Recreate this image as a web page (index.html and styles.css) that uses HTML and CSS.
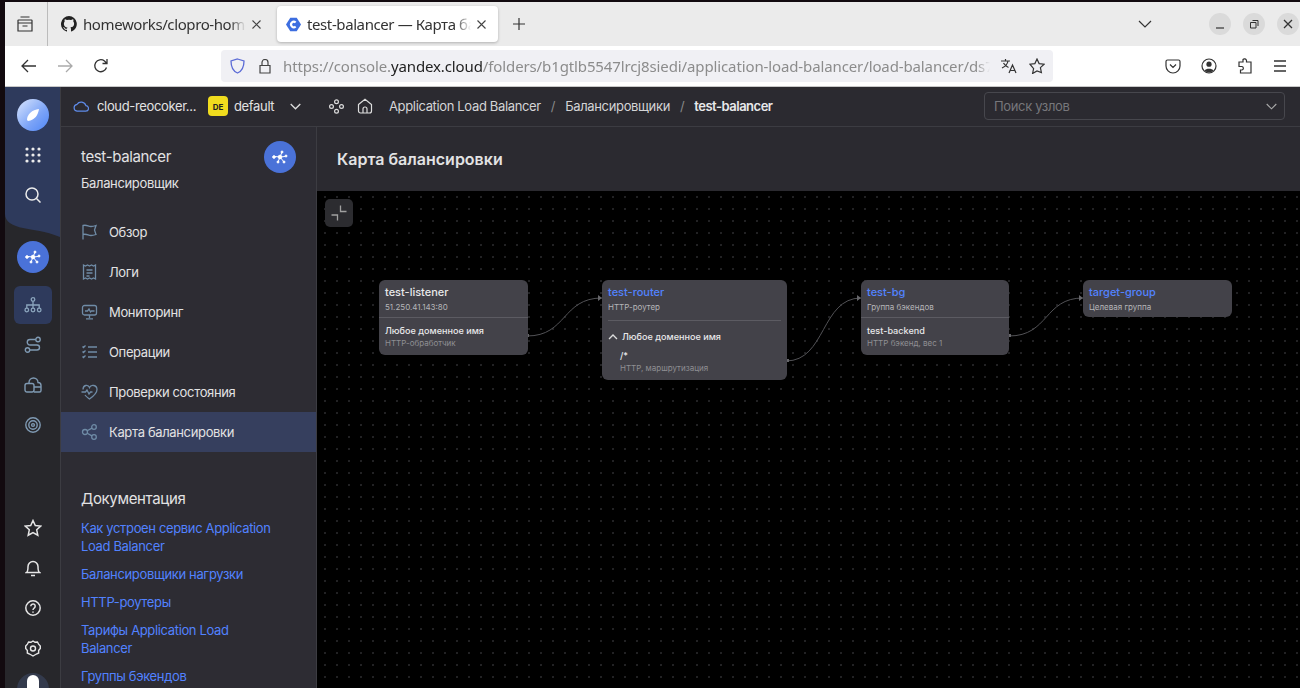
FILE: index.html
```html
<!DOCTYPE html>
<html lang="en">
<head>
    <meta charset="UTF-8">
    <title>test-balancer — Карта балансировки</title>
    <link rel="stylesheet" href="styles.css">
</head>
<body>

    <!-- Browser chrome -->
    <div class="tabbar">
        <svg class="tab-list" width="16" height="16" viewBox="0 0 16 16" fill="none" stroke="#333" stroke-width="1.200"><path d="M3.500 1h9M1.500 4h13a.5.500 0 0 1 .5.500V15H1V4.500a.5.500 0 0 1 .5-.5zM1 7h14M5.500 10h5"/></svg>
        <div class="tab">
            <svg width="16" height="16" viewBox="0 0 16 16" fill="#222"><path d="M8 0a8 8 0 0 0-2.500 15.600c.4.100.5-.2.5-.4v-1.400c-2.200.5-2.700-1-2.700-1-.4-.9-.9-1.200-.9-1.200-.7-.5.100-.5.100-.5.800.1 1.200.8 1.200.8.700 1.200 1.900.9 2.300.7.100-.5.300-.9.500-1.100-1.800-.2-3.600-.9-3.600-4 0-.9.300-1.600.8-2.100-.1-.2-.4-1 .1-2.100 0 0 .7-.2 2.200.8a7.600 7.600 0 0 1 4 0c1.500-1 2.200-.8 2.200-.8.400 1.100.2 1.900.1 2.100.5.600.8 1.300.8 2.100 0 3.100-1.900 3.700-3.700 3.900.3.300.6.700.6 1.500v2.200c0 .2.100.5.600.4A8 8 0 0 0 8 0z"/></svg>
            <span class="tab-title">homeworks/clopro-home</span>
            <svg class="tab-close" width="9" height="9" viewBox="0 0 9 9" fill="none" stroke="#444" stroke-width="1.100"><path d="M.5.500l8 8M8.500.500l-8 8"/></svg>
        </div>
        <div class="tab tab-active">
            <svg width="15" height="15" viewBox="0 0 14 14"><path d="M4 .8h6L14 7l-4 6.200H4L0 7z" fill="#3d6ee0"/><path d="M9 5.200A2.500 2.500 0 1 0 9 8.800" fill="none" stroke="#fff" stroke-width="2"/></svg>
            <span class="tab-title">test-balancer — Карта ба</span>
            <svg class="tab-close" width="9" height="9" viewBox="0 0 9 9" fill="none" stroke="#444" stroke-width="1.100"><path d="M.5.500l8 8M8.500.500l-8 8"/></svg>
        </div>
        <svg class="new-tab" width="12" height="12" viewBox="0 0 12 12" fill="none" stroke="#333" stroke-width="1.200"><path d="M6 0v12M0 6h12"/></svg>
        <svg class="all-tabs" width="14" height="8" viewBox="0 0 14 8" fill="none" stroke="#333" stroke-width="1.200"><path d="M1 1l6 6 6-6"/></svg>
        <div class="win-buttons">
            <span class="win-btn"><svg width="10" height="10" viewBox="0 0 10 10" stroke="#333" stroke-width="1.200" fill="none"><path d="M1 9h8"/></svg></span>
            <span class="win-btn"><svg width="10" height="10" viewBox="0 0 10 10" stroke="#333" fill="none"><path d="M1.500 3.500h5.500v5.500H1.500zM3.500 1.500h5.500V7"/></svg></span>
            <span class="win-btn"><svg width="10" height="10" viewBox="0 0 10 10" stroke="#333" stroke-width="1.300" fill="none"><path d="M1 1l8 8M9 1l-8 8"/></svg></span>
        </div>
    </div>

    <div class="toolbar">
        <svg class="tool tool-back" width="16" height="14" viewBox="0 0 16 14" fill="none" stroke="#333" stroke-width="1.300"><path d="M15 7H1.500M7 1L1 7l6 6"/></svg>
        <svg class="tool tool-fwd" width="16" height="14" viewBox="0 0 16 14" fill="none" stroke="#aaa" stroke-width="1.300"><path d="M1 7h13.500M9 1l6 6-6 6"/></svg>
        <svg class="tool tool-reload" width="16" height="16" viewBox="0 0 16 16" fill="none" stroke="#333" stroke-width="1.300"><path d="M13.500 9.500A6 6 0 1 1 11.500 3L14 5.500M14 1v4.500H9.500"/></svg>
        <div class="urlbar">
            <svg width="15" height="16" viewBox="0 0 15 16" fill="none" stroke="#5b6bd6" stroke-width="1.300"><path d="M7.500 1L14 3c0 6-1.500 10-6.500 12C2.500 13 1 9 1 3z"/></svg>
            <svg class="lock" width="12" height="15" viewBox="0 0 12 15" fill="none" stroke="#444" stroke-width="1.200"><path d="M1 6.500h10v7.500H1zM3 6.500V3.500a3 3 0 0 1 6 0v3"/></svg>
            <div class="url"><span class="url-dim">https://console.</span><span class="url-host">yandex.cloud</span><span class="url-dim">/folders/b1gtlb5547lrcj8siedi/application-load-balancer/load-balancer/ds7</span></div>
            <svg width="18" height="16" viewBox="0 0 18 16" fill="none" stroke="#333" stroke-width="1.200"><path d="M1 3h9M5.500 1v2M8 3c-.5 3-3 5.500-6 7M3.500 5c1 2 3 3.500 5 4.500M9 15l3.500-8 3.500 8M10.300 12.500h4.500"/></svg>
            <svg class="star" width="16" height="16" viewBox="0 0 16 16" fill="none" stroke="#333" stroke-width="1.200"><path d="M8 1l2.100 4.600 5 .6-3.700 3.400 1 4.900L8 13l-4.400 2.500 1-4.900L.9 6.200l5-.6z"/></svg>
        </div>
        <div class="tool-right">
            <svg width="16" height="16" viewBox="0 0 16 16" fill="none" stroke="#333" stroke-width="1.200"><path d="M2.500 2h11A1.500 1.500 0 0 1 15 3.500V8A7 7 0 0 1 1 8V3.500A1.500 1.500 0 0 1 2.500 2zM5 6.500l3 3 3-3"/></svg>
            <svg width="16" height="16" viewBox="0 0 16 16"><circle cx="8" cy="8" r="7" fill="none" stroke="#333" stroke-width="1.200"/><circle cx="8" cy="6.200" r="2.600" fill="#333"/><path d="M3.500 12.500C5 10 11 10 12.500 12.500 10 15 6 15 3.500 12.500z" fill="#333"/></svg>
            <svg width="16" height="16" viewBox="0 0 16 16" fill="none" stroke="#333" stroke-width="1.200"><path d="M6 1.500a2 2 0 0 1 3.500 1V4h4.500v11H3.500v-3h1.500a1.800 1.800 0 0 0 0-3.500H2V4h4z"/></svg>
            <svg width="14" height="12" viewBox="0 0 14 12" fill="none" stroke="#333" stroke-width="1.300"><path d="M1 1h12M1 6h12M1 11h12"/></svg>
        </div>
    </div>

    <!-- Console -->
    <div class="app">
        <aside class="rail">
            <div class="rail-head">
                <div class="logo">
                    <svg width="32" height="32" viewBox="0 0 32 32"><defs><linearGradient id="logo-fill" x1="0" y1="0" x2="1" y2="1"><stop offset="0" stop-color="#dbe6fd"/><stop offset="0.6" stop-color="#7ba3f7"/><stop offset="1" stop-color="#4f86f7"/></linearGradient></defs><circle cx="16" cy="16" r="16" fill="url(#logo-fill)"/><path d="M10 21c0-6 5-10 12-11-1 6-4 11-11 12z" fill="#fff"/></svg>
                </div>
                <svg class="rail-icon rail-apps" width="16" height="16" viewBox="0 0 16 16" fill="#ececec"><circle cx="2" cy="2" r="1.600"/><circle cx="8" cy="2" r="1.600"/><circle cx="14" cy="2" r="1.600"/><circle cx="2" cy="8" r="1.600"/><circle cx="8" cy="8" r="1.600"/><circle cx="14" cy="8" r="1.600"/><circle cx="2" cy="14" r="1.600"/><circle cx="8" cy="14" r="1.600"/><circle cx="14" cy="14" r="1.600"/></svg>
                <svg class="rail-icon rail-search" width="16" height="16" viewBox="0 0 16 16" fill="none" stroke="#ececec" stroke-width="1.500"><circle cx="7" cy="7" r="6"/><path d="M11.500 11.500L15.500 15.500"/></svg>
            </div>
            <svg class="rail-wave" width="55" height="31" viewBox="0 0 55 31"><path d="M0 0h55v31C40 25 28 24 18 22 8 20 0 16 0 8z" fill="#2e3a5c"/></svg>

            <div class="service-badge">
                <svg width="16" height="16" viewBox="0 0 16 16" fill="#fff" stroke="#fff"><path d="M8 8L3 7.500M8 8l2-5M8 8l5-.5M8 8l-2 5M8 8l4 5" stroke-width="1"/><circle cx="8" cy="8" r="1.800"/><circle cx="2" cy="8" r="1.300"/><circle cx="10" cy="3" r="1"/><circle cx="14" cy="7" r="1"/><circle cx="6" cy="13" r="1"/><circle cx="12" cy="13" r="1"/></svg>
            </div>
            <div class="rail-item rail-item-active">
                <svg width="18" height="16" viewBox="0 0 18 16" fill="none" stroke="#8ba5bd" stroke-width="1.300"><circle cx="9" cy="2.500" r="1.800"/><circle cx="2.800" cy="13" r="1.800"/><circle cx="9" cy="13" r="1.800"/><circle cx="15.200" cy="13" r="1.800"/><path d="M9 4.500v6.500M2.800 11V8h12.400v3"/></svg>
            </div>
            <div class="rail-item">
                <svg width="18" height="18" viewBox="0 0 18 18" fill="none" stroke="#7f9ab3" stroke-width="1.400"><circle cx="14" cy="3.500" r="2.200"/><circle cx="3.500" cy="14" r="2.200"/><path d="M11.800 3.500H6a2.500 2.500 0 0 0 0 5.500h7a2.500 2.500 0 0 1 0 5H5.700"/></svg>
            </div>
            <div class="rail-item">
                <svg width="18" height="16" viewBox="0 0 18 16" fill="none" stroke="#7f9ab3" stroke-width="1.400"><rect x="1" y="6.500" width="9" height="8.500" rx="2"/><path d="M5 6.500v-1a4.500 4.500 0 0 1 9 0 3 3 0 0 1 3 3v5a1.500 1.500 0 0 1-1.500 1.500H10M10 10h7"/></svg>
            </div>
            <div class="rail-item">
                <svg width="16" height="16" viewBox="0 0 16 16" fill="none" stroke="#7f9ab3" stroke-width="1.400"><circle cx="8" cy="8" r="7.200"/><circle cx="8" cy="8" r="4.200"/><circle cx="8" cy="8" r="1.400"/></svg>
            </div>

            <div class="rail-bottom">
                <div class="rail-item">
                    <svg width="18" height="18" viewBox="0 0 18 18" fill="none" stroke="#e6e6e6" stroke-width="1.500"><path d="M9 1.500l2.300 5 5.400.6-4 3.700 1.100 5.400L9 13.500l-4.800 2.700 1.100-5.400-4-3.700 5.400-.6z"/></svg>
                </div>
                <div class="rail-item">
                    <svg width="16" height="18" viewBox="0 0 16 18" fill="none" stroke="#e6e6e6" stroke-width="1.500"><path d="M1.500 13.500c1.500-1 1.500-3 1.500-6a5 5 0 0 1 10 0c0 3 0 5 1.500 6zM6 16.500h4"/></svg>
                </div>
                <div class="rail-item">
                    <svg width="16" height="16" viewBox="0 0 16 16" fill="none" stroke="#e6e6e6" stroke-width="1.500"><circle cx="8" cy="8" r="7.200"/><path d="M5.800 6.200a2.200 2.200 0 1 1 3.400 1.800C8.400 8.600 8 9 8 10M8 11.500v1.300"/></svg>
                </div>
                <div class="rail-item">
                    <svg width="16" height="17" viewBox="0 0 16 17" fill="none" stroke="#e6e6e6" stroke-width="1.400"><path d="M8 1l2 1.300 2.400-.3 1.200 2.100L15.300 6v2.500l-1.700 2 .1 2.500-2.300 1L8 16l-3.400-2-2.300-1 .1-2.500-1.700-2V6l1.700-1.900L3.600 2 6 2.300z"/><circle cx="8" cy="8.500" r="2.500"/></svg>
                </div>
                <div class="avatar"><span class="avatar-shape"></span></div>
            </div>
        </aside>

        <div class="workspace">
            <header class="topbar">
                <div class="cloud-switch">
                    <svg width="16" height="12" viewBox="0 0 16 12" fill="none" stroke="#5f8be8" stroke-width="1.200"><path d="M4 11.200h8.500a2.800 2.800 0 0 0 .4-5.600A5 5 0 0 0 4 4.300a3.500 3.500 0 0 0 0 6.900z"/></svg>
                    <span class="cloud-name">cloud-reocoker...</span>
                    <span class="folder-badge">DE</span>
                    <span class="folder-name">default</span>
                    <svg class="chev" width="11" height="7" viewBox="0 0 11 7" fill="none" stroke="#ddd" stroke-width="1.300"><path d="M.7 1l4.800 4.800L10.300 1"/></svg>
                </div>
                <nav class="crumbs">
                    <svg width="15" height="15" viewBox="0 0 15 15" fill="none" stroke="#ddd" stroke-width="1.200"><circle cx="7.500" cy="2.700" r="1.900"/><circle cx="2.500" cy="7.500" r="1.900"/><circle cx="12.500" cy="7.500" r="1.900"/><circle cx="7.500" cy="12.300" r="1.900"/></svg>
                    <svg class="home" width="16" height="16" viewBox="0 0 16 16" fill="none" stroke="#ddd" stroke-width="1.200"><path d="M1.500 6.500L8 1.200l6.500 5.300V13a2 2 0 0 1-2 2h-9a2 2 0 0 1-2-2zM6 15v-4a2 2 0 0 1 4 0v4"/></svg>
                    <a class="crumb crumb-first">Application Load Balancer</a>
                    <span class="crumb-sep">/</span>
                    <a class="crumb">Балансировщики</a>
                    <span class="crumb-sep">/</span>
                    <a class="crumb crumb-current">test-balancer</a>
                </nav>
                <div class="node-search">
                    <span>Поиск узлов</span>
                    <svg width="11" height="7" viewBox="0 0 11 7" fill="none" stroke="#aaa" stroke-width="1.100"><path d="M.7 1l4.800 4.800L10.300 1"/></svg>
                </div>
            </header>

            <div class="columns">
                <aside class="sidebar">
                    <div class="side-head">
                        <div>
                            <div class="side-title">test-balancer</div>
                            <div class="side-sub">Балансировщик</div>
                        </div>
                        <div class="service-badge">
                            <svg width="16" height="16" viewBox="0 0 16 16" fill="#fff" stroke="#fff"><path d="M8 8L3 7.500M8 8l2-5M8 8l5-.5M8 8l-2 5M8 8l4 5" stroke-width="1"/><circle cx="8" cy="8" r="1.800"/><circle cx="2" cy="8" r="1.300"/><circle cx="10" cy="3" r="1"/><circle cx="14" cy="7" r="1"/><circle cx="6" cy="13" r="1"/><circle cx="12" cy="13" r="1"/></svg>
                        </div>
                    </div>

                    <ul class="side-nav">
                        <li><svg width="16" height="16" viewBox="0 0 16 16" fill="none" stroke="#6f8ba6" stroke-width="1.300"><path d="M1.500 15.500V1.500c4-1 5 1 8 1 2 0 3.500-.5 5-1l-1.500 4.500 1.500 4.500c-1.500.5-3 1-5 1-3 0-4-2-8-1"/></svg>Обзор</li>
                        <li><svg width="16" height="16" viewBox="0 0 16 16" fill="none" stroke="#6f8ba6" stroke-width="1.300"><path d="M2 1l2 1 2-1 2 1 2-1 2 1 2-1v14l-2-1-2 1-2-1-2 1-2-1-2 1zM5 6h6M5 9h6M5 12h3"/></svg>Логи</li>
                        <li><svg width="16" height="16" viewBox="0 0 16 16" fill="none" stroke="#6f8ba6" stroke-width="1.300"><rect x="1" y="1.500" width="14" height="9.500" rx="2"/><path d="M3.500 7h2.500l1.500-2 1.500 3 1-1h3M8 11v3M4.500 14.800h7"/></svg>Мониторинг</li>
                        <li><svg width="16" height="16" viewBox="0 0 16 16" fill="none" stroke="#6f8ba6" stroke-width="1.300"><path d="M6.500 3h9M6.500 8h9M6.500 13h9M1 2.500l1 1 2-2M1 7.500l1 1 2-2M1 12.500l1 1 2-2"/></svg>Операции</li>
                        <li><svg width="17" height="16" viewBox="0 0 17 16" fill="none" stroke="#6f8ba6" stroke-width="1.300"><path d="M2 5.500C2 1 7 0 8.500 3.500 10 0 16 1 16 5.500c0 4-4 7-7.500 9.500C6.500 13.500 5 12.500 4 11M.5 8h4l1.500-2 2 4 1.500-2h2"/></svg>Проверки состояния</li>
                        <li class="active"><svg width="16" height="16" viewBox="0 0 16 16" fill="none" stroke="#6f8ba6" stroke-width="1.300"><circle cx="3.500" cy="8" r="2.500"/><circle cx="12.500" cy="3" r="2.300"/><circle cx="12.500" cy="13" r="2.300"/><path d="M5.700 6.800l4.800-2.700M5.700 9.200l4.800 2.700"/></svg>Карта балансировки</li>
                    </ul>

                    <h2 class="docs-title">Документация</h2>
                    <a class="doc-link">Как устроен сервис Application Load Balancer</a>
                    <a class="doc-link">Балансировщики нагрузки</a>
                    <a class="doc-link">HTTP-роутеры</a>
                    <a class="doc-link">Тарифы Application Load Balancer</a>
                    <a class="doc-link">Группы бэкендов</a>
                </aside>

                <main class="content">
                    <div class="page-title">Карта балансировки</div>
                    <div class="canvas">
                        <button class="collapse-btn">
                            <svg width="18" height="18" viewBox="0 0 18 18" fill="none" stroke="#a0a0a0" stroke-width="1.300"><path d="M10.500 1.500v6H16.500M1.500 11h6v5.500"/></svg>
                        </button>

                        <svg class="edges" width="983" height="497" viewBox="0 0 983 497" fill="none" stroke="#525256" stroke-width="1">
                            <path d="M210 145C250 145 245 107 285 107"/>
                            <path d="M469 170C509 170 504 107 544 107"/>
                            <path d="M692 145C732 145 727 107 766 107"/>
                            <path d="M281 104l4 3-4 3zM540 104l4 3-4 3zM762 104l4 3-4 3z" fill="#66666a" stroke="none"/>
                            <path d="M209 143h3v3h-3zM469 168h3v3h-3zM691 143h3v3h-3z" fill="#66666a" stroke="none"/>
                        </svg>

                        <div class="node node-listener">
                            <div class="node-head">
                                <div class="node-name">test-listener</div>
                                <div class="node-meta">51.250.41.143:80</div>
                            </div>
                            <div class="node-row">
                                <div class="row-name">Любое доменное имя</div>
                                <div class="row-meta">HTTP-обработчик</div>
                            </div>
                        </div>

                        <div class="node node-router">
                            <div class="node-head node-head-inset">
                                <div class="node-name node-link">test-router</div>
                                <div class="node-meta">HTTP-роутер</div>
                            </div>
                            <div class="route-title">
                                <svg width="10" height="6" viewBox="0 0 10 6" fill="none" stroke="#ddd" stroke-width="1.300"><path d="M1 5l4-4 4 4"/></svg>
                                <span class="row-name">Любое доменное имя</span>
                            </div>
                            <div class="route-path">
                                <div class="row-name">/*</div>
                                <div class="row-meta">HTTP, маршрутизация</div>
                            </div>
                        </div>

                        <div class="node node-bg">
                            <div class="node-head">
                                <div class="node-name node-link">test-bg</div>
                                <div class="node-meta">Группа бэкендов</div>
                            </div>
                            <div class="node-row">
                                <div class="row-name">test-backend</div>
                                <div class="row-meta">HTTP бэкенд, вес 1</div>
                            </div>
                        </div>

                        <div class="node node-target">
                            <div class="node-head node-head-plain">
                                <div class="node-name node-link">target-group</div>
                                <div class="node-meta">Целевая группа</div>
                            </div>
                        </div>
                    </div>
                </main>
            </div>
        </div>
    </div>

</body>
</html>
```

FILE: styles.css
```css
* {
    box-sizing: border-box;
}

html, body {
    height: 100%;
}

body {
    margin: 0;
    width: 1300px;
    height: 688px;
    overflow: hidden;
    padding: 2px 0 0 5px;
    background-color: #120a0f;
    font-family: "Inter", "Noto Sans", sans-serif;
    color: #e2e2e3;
}

/* Browser chrome */
.tabbar {
    height: 44px;
    background-color: #ebebeb;
    display: flex;
    align-items: center;
    font-family: "Noto Sans", sans-serif;
    color: #333;
}

.tab-list {
    margin-left: 12px;
    margin-right: 14px;
    flex-shrink: 0;
}

.tab {
    height: 36px;
    width: 226px;
    display: flex;
    align-items: center;
    gap: 6px;
    padding: 0 12px 0 13px;
    flex-shrink: 0;
}

.tab:first-of-type {
    height: 44px;
    border-left: 1px solid #bbb;
}

.tab-title {
    flex: 1;
    overflow: hidden;
    white-space: nowrap;
    font-size: 15px;
    letter-spacing: -0.4px;
    -webkit-mask-image: linear-gradient(to right, #000 90%, transparent);
    mask-image: linear-gradient(to right, #000 90%, transparent);
}

.tab-close {
    flex-shrink: 0;
}

.tab-active {
    width: 221px;
    margin-left: 4px;
    padding-left: 9px;
    background-color: #fff;
    border-radius: 4px;
    box-shadow: 0 1px 3px rgba(0, 0, 0, 0.25);
}

.new-tab {
    margin-left: 15px;
}

.all-tabs {
    margin-left: auto;
    margin-right: 57px;
}

.win-buttons {
    display: flex;
    gap: 12px;
    margin-right: 1px;
}

.win-btn {
    width: 22px;
    height: 22px;
    border-radius: 50%;
    background-color: #dadada;
    display: flex;
    align-items: center;
    justify-content: center;
}

.toolbar {
    height: 41px;
    background-color: #fff;
    display: flex;
    align-items: center;
    border-bottom: 1px solid #c8c8c8;
    padding-left: 16px;
}

.tool-fwd,
.tool-reload {
    margin-left: 20px;
}

.urlbar {
    width: 832px;
    height: 32px;
    margin-left: 112px;
    background-color: #f0f0f4;
    border-radius: 4px;
    display: flex;
    align-items: center;
    padding-left: 9px;
}

.lock {
    margin-left: 14px;
}

.url {
    width: 707px;
    margin-left: 12px;
    margin-right: 10px;
    overflow: hidden;
    white-space: nowrap;
    font-family: "Noto Sans", sans-serif;
    font-size: 15px;
    letter-spacing: -0.12px;
    -webkit-mask-image: linear-gradient(to right, #000 98%, transparent);
    mask-image: linear-gradient(to right, #000 98%, transparent);
}

.url-dim {
    color: #8c8c8c;
}

.url-host {
    color: #222;
}

.star {
    margin-left: 11px;
}

.tool-right {
    display: flex;
    align-items: center;
    gap: 20px;
    margin-left: 112px;
}

/* Console */
.app {
    height: 601px;
    display: flex;
    background-color: #2d2c33;
    font-size: 13px;
    letter-spacing: -0.35px;
}

.rail {
    width: 56px;
    flex-shrink: 0;
    background-color: #27272b;
    border-right: 1px solid #3c3c42;
    display: flex;
    flex-direction: column;
    align-items: center;
    overflow: hidden;
}

.rail-head {
    width: 100%;
    height: 119px;
    background-color: #2e3a5c;
    display: flex;
    flex-direction: column;
    align-items: center;
}

.logo {
    margin-top: 12px;
    height: 32px;
}

.rail-apps {
    margin-top: 16px;
}

.rail-search {
    margin-top: 24px;
}

.rail-wave {
    display: block;
    flex-shrink: 0;
    margin-bottom: 4px;
}

.service-badge {
    width: 32px;
    height: 32px;
    border-radius: 50%;
    background-color: #4a72d8;
    display: flex;
    align-items: center;
    justify-content: center;
    flex-shrink: 0;
}

.rail-item {
    width: 38px;
    height: 40px;
    flex-shrink: 0;
    display: flex;
    align-items: center;
    justify-content: center;
}

.rail-item-active {
    height: 38px;
    margin-top: 13px;
    margin-bottom: 1px;
    border-radius: 6px;
    background-color: #2e3a5c;
}

.rail-bottom {
    margin-top: auto;
    display: flex;
    flex-direction: column;
    align-items: center;
    margin-bottom: -17px;
}

.avatar {
    width: 32px;
    height: 32px;
    margin-top: 5px;
    border-radius: 50%;
    background-color: #333a4c;
    display: flex;
    justify-content: center;
    padding-top: 2px;
}

.avatar-shape {
    width: 12px;
    height: 20px;
    background-color: #fff;
    border-radius: 6px;
}

.workspace {
    flex: 1;
    display: flex;
    flex-direction: column;
    min-width: 0;
}

.topbar {
    height: 40px;
    flex-shrink: 0;
    background-color: #2b2a30;
    border-bottom: 1px solid #3c3c42;
    display: flex;
    align-items: center;
    padding: 0 15px 1px 12px;
}

.cloud-switch {
    display: flex;
    align-items: center;
}

.cloud-name {
    margin-left: 8px;
    width: 111px;
    white-space: nowrap;
}

.folder-badge {
    width: 20px;
    height: 20px;
    border-radius: 4px;
    background-color: #f0dc1e;
    color: #222;
    font-size: 8px;
    font-weight: 700;
    letter-spacing: 0;
    display: flex;
    align-items: center;
    justify-content: center;
    padding-top: 2px;
}

.folder-name {
    margin-left: 6px;
    width: 41px;
}

.chev {
    margin-left: 15px;
}

.crumbs {
    display: flex;
    align-items: center;
    margin-left: 28px;
    color: #d4d4d6;
}

.home {
    margin-left: 13px;
}

.crumb-first {
    margin-left: 16px;
}

.crumb-sep {
    margin: 0 10px;
    color: #888;
}

.crumb-current {
    font-weight: 600;
    color: #e8e8ea;
    letter-spacing: -0.5px;
}

.node-search {
    width: 301px;
    height: 28px;
    margin-left: auto;
    border: 1px solid #47474d;
    border-radius: 4px;
    display: flex;
    align-items: center;
    justify-content: space-between;
    padding: 0 7px 0 9px;
    color: #77777b;
}

.columns {
    flex: 1;
    display: flex;
    min-height: 0;
}

.sidebar {
    width: 256px;
    flex-shrink: 0;
    background-color: #2d2c33;
    border-right: 1px solid #3c3c42;
}

.side-head {
    display: flex;
    justify-content: space-between;
    padding: 14px 20px 0;
    height: 85px;
}

.side-title {
    font-size: 15px;
    margin-top: 7px;
    line-height: 18px;
}

.side-sub {
    margin-top: 9px;
    line-height: 16px;
}

.side-nav {
    list-style: none;
    margin: 0;
    padding: 0;
}

.side-nav li {
    height: 40px;
    display: flex;
    align-items: center;
    gap: 11px;
    padding-left: 20px;
}

.side-nav li svg {
    width: 17px;
}

.side-nav .active {
    background-color: #363f5e;
}

.docs-title {
    font-size: 15px;
    font-weight: 400;
    line-height: 18px;
    margin: 38px 20px 11px;
}

.doc-link {
    display: block;
    margin: 0 40px 10px 20px;
    line-height: 18px;
    color: #5282ff;
}

.content {
    flex: 1;
    min-width: 0;
    display: flex;
    flex-direction: column;
}

.page-title {
    height: 64px;
    flex-shrink: 0;
    padding: 22px 20px 0;
    font-size: 16px;
    font-weight: 600;
    line-height: 20px;
    letter-spacing: 0;
    background-color: #2b2a30;
}

.canvas {
    flex: 1;
    position: relative;
    background-color: #000;
    background-image: radial-gradient(circle, #2e2e31 0.6px, transparent 1px);
    background-size: 12px 12px;
    background-position: 2px 0;
}

.collapse-btn {
    position: absolute;
    left: 8px;
    top: 8px;
    width: 28px;
    height: 28px;
    padding: 0;
    border: 0;
    border-radius: 5px;
    background-color: #2c2c30;
    display: flex;
    align-items: center;
    justify-content: center;
}

.edges {
    position: absolute;
    left: 0;
    top: 0;
}

.node {
    position: absolute;
    background-color: #434249;
    border-radius: 6px;
    letter-spacing: 0;
}

.node-listener {
    left: 62px;
    top: 89px;
    width: 149px;
    height: 75px;
}

.node-router {
    left: 285px;
    top: 89px;
    width: 185px;
    height: 100px;
}

.node-bg {
    left: 544px;
    top: 89px;
    width: 148px;
    height: 75px;
}

.node-target {
    left: 766px;
    top: 89px;
    width: 149px;
    height: 37px;
}

.node-head {
    height: 38px;
    padding: 6px 6px 0;
    border-bottom: 1px solid #5c5b62;
}

.node-head-inset {
    height: 41px;
    margin: 0 6px;
    padding: 6px 0 0;
}

.node-head-plain {
    border-bottom: 0;
}

.node-name {
    font-size: 11px;
    font-weight: 500;
    line-height: 13px;
    color: #e8e8ea;
}

.node-link {
    color: #5282ff;
}

.node-meta {
    margin-top: 3px;
    font-size: 8px;
    line-height: 10px;
    color: #b5b5b8;
}

.node-row {
    padding: 7px 6px 0;
}

.row-name {
    font-size: 9.100px;
    font-weight: 500;
    line-height: 12px;
    color: #e8e8ea;
}

.row-meta {
    margin-top: 1px;
    font-size: 8px;
    line-height: 10px;
    color: #8f8f93;
}

.route-title {
    display: flex;
    align-items: center;
    gap: 4px;
    padding: 10px 6px 0;
}

.route-path {
    padding: 7px 18px 0;
}
```
